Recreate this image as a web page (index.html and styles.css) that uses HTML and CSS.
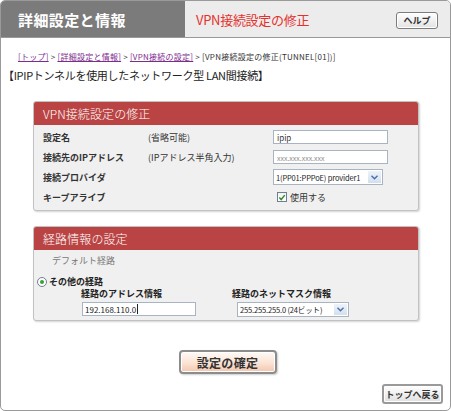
FILE: index.html
```html
<!DOCTYPE html>
<html lang="ja">
<head>
<meta charset="utf-8">
<title>VPN接続設定の修正</title>
<link rel="stylesheet" href="styles.css">
</head>
<body>
<div class="frame">
  <div class="header">
    <div class="header-left">詳細設定と情報</div>
    <div class="header-right">
      <span class="page-title">VPN接続設定の修正</span>
      <button class="help-btn" type="button">ヘルプ</button>
    </div>
  </div>

  <div class="breadcrumb">
    <a href="#">[トップ]</a> &gt; <a href="#">[詳細設定と情報]</a> &gt; <a href="#">[VPN接続の設定]</a> &gt; [VPN接続設定の修正(TUNNEL[01])]
  </div>
  <div class="section-title">【IPIPトンネルを使用したネットワーク型 LAN間接続】</div>

  <div class="panel panel-vpn">
    <div class="panel-head">VPN接続設定の修正</div>
    <div class="panel-body grid">
      <div class="lbl">設定名</div>
      <div class="note">(省略可能)</div>
      <div class="ctl"><input class="txt" type="text" value="ipip"></div>

      <div class="lbl">接続先のIPアドレス</div>
      <div class="note">(IPアドレス半角入力)</div>
      <div class="ctl"><input class="txt ph" type="text" placeholder="xxx.xxx.xxx.xxx"></div>

      <div class="lbl">接続プロバイダ</div>
      <div class="note"></div>
      <div class="ctl">
        <div class="sel sel-prov">
          <span class="sel-text">1(PP01:PPPoE) provider1</span>
          <span class="sel-arrow"><svg width="7" height="5" viewBox="0 0 7 5"><path d="M0.5 0.8 L3.5 3.8 L6.5 0.8" fill="none" stroke="#4a6fa5" stroke-width="1.4"/></svg></span>
        </div>
      </div>

      <div class="lbl">キープアライブ</div>
      <div class="note"></div>
      <div class="ctl chk-wrap">
        <span class="chk"><svg width="9" height="9" viewBox="0 0 9 9"><path d="M1.5 4.5 L3.6 6.8 L7.6 1.8" fill="none" stroke="#2e8b2e" stroke-width="1.6"/></svg></span>
        <span class="chk-label">使用する</span>
      </div>
    </div>
  </div>

  <div class="panel panel-route">
    <div class="panel-head head-route">経路情報の設定</div>
    <div class="panel-body route-body">
      <div class="default-route">デフォルト経路</div>
      <div class="other-route">
        <span class="radio"><span class="radio-dot"></span></span>
        <span class="other-label">その他の経路</span>
      </div>
      <div class="route-fields">
        <div class="field field-addr">
          <div class="field-lbl">経路のアドレス情報</div>
          <div class="addr-input"><span class="addr-val">192.168.110.0</span><span class="caret"></span></div>
        </div>
        <div class="field field-mask">
          <div class="field-lbl">経路のネットマスク情報</div>
          <div class="sel sel-mask">
            <span class="sel-text">255.255.255.0 (24ビット)</span>
            <span class="sel-arrow"><svg width="7" height="5" viewBox="0 0 7 5"><path d="M0.5 0.8 L3.5 3.8 L6.5 0.8" fill="none" stroke="#4a6fa5" stroke-width="1.4"/></svg></span>
          </div>
        </div>
      </div>
    </div>
  </div>

  <div class="actions">
    <button class="confirm-btn" type="button">設定の確定</button>
  </div>
  <div class="back-row">
    <button class="back-btn" type="button">トップへ戻る</button>
  </div>
</div>
</body>
</html>
```

FILE: styles.css
```css
html, body {
  margin: 0;
  padding: 0;
  background: #ffffff;
}
body {
  font-family: "Noto Sans CJK JP", "Noto Sans", sans-serif;
  color: #333333;
}
.frame {
  box-sizing: border-box;
  width: 451px;
  height: 411px;
  border: 1px solid #9a9a9a;
  border-radius: 5px;
  overflow: hidden;
  display: flex;
  flex-direction: column;
  background: #ffffff;
}
.header {
  height: 36px;
  display: flex;
  border-bottom: 1px solid #9a9a9a;
  flex-shrink: 0;
}
.header-left {
  width: 184px;
  box-sizing: border-box;
  background: #7b7b7b;
  color: #ffffff;
  font-weight: bold;
  font-size: 15px;
  letter-spacing: 0.4px;
  padding-left: 17px;
  display: flex;
  align-items: center;
}
.header-right {
  flex: 1;
  background: #ececec;
  display: flex;
  align-items: center;
  justify-content: space-between;
  padding: 0 12px 0 11px;
}
.page-title {
  color: #e5312d;
  font-size: 13px;
  letter-spacing: -0.3px;
}
.help-btn {
  width: 42px;
  height: 17px;
  margin-top: 3px;
  padding: 0;
  border: 1px solid #7c7c7c;
  border-radius: 3px;
  background: linear-gradient(#ffffff, #e2e2e2);
  box-shadow: inset 0 0 0 1px #ffffff;
  font-family: "Noto Sans CJK JP", sans-serif;
  font-size: 9px;
  font-weight: bold;
  color: #333333;
  line-height: 15px;
}
.breadcrumb {
  margin-top: 13px;
  padding-left: 17px;
  font-size: 8px;
  line-height: 12px;
  letter-spacing: 0.25px;
  color: #333333;
  white-space: nowrap;
}
.breadcrumb a {
  color: #7d2b8e;
  text-decoration: underline;
}
.section-title {
  margin-top: 5px;
  padding-left: 2px;
  font-size: 11px;
  line-height: 14px;
  color: #222222;
  letter-spacing: -0.3px;
}
.panel {
  margin-left: 32px;
  width: 386px;
  box-sizing: border-box;
  border: 1px solid #c2c2c2;
  border-radius: 3px;
  background: #f0f0f0;
  box-shadow: 1px 1px 2px rgba(0, 0, 0, 0.18);
  overflow: hidden;
}
.panel-vpn {
  margin-top: 19px;
}
.panel-route {
  margin-top: 15px;
}
.panel-head {
  height: 23px;
  background: #ba4444;
  color: #ffffff;
  font-size: 12px;
  font-weight: 300;
  line-height: 23px;
  padding-left: 9px;
  letter-spacing: 0.1px;
}
.grid {
  display: grid;
  grid-template-columns: 105px 125px 1fr;
  grid-auto-rows: 20px;
  align-items: center;
  padding: 2px 0 3px 9px;
}
.lbl {
  font-size: 9px;
  font-weight: bold;
  color: #333333;
  white-space: nowrap;
}
.note {
  font-size: 9px;
  color: #333333;
  white-space: nowrap;
}
.ctl {
  display: flex;
  align-items: center;
}
.txt {
  box-sizing: border-box;
  width: 115px;
  height: 14px;
  border: 1px solid #a9b4c2;
  background: #ffffff;
  padding: 0 3px;
  font-family: "Noto Sans CJK JP", sans-serif;
  font-size: 8px;
  color: #333333;
  outline: none;
}
.txt::placeholder {
  color: #8a8a8a;
  font-size: 7px;
}
.sel {
  position: relative;
  box-sizing: border-box;
  height: 16px;
  border: 1px solid #a9b4c2;
  background: #ffffff;
  display: flex;
  align-items: center;
  overflow: hidden;
}
.sel-prov {
  width: 110px;
}
.sel-text {
  padding-left: 2px;
  font-size: 7.5px;
  letter-spacing: -0.15px;
  color: #222222;
  white-space: nowrap;
}
.sel-arrow {
  position: absolute;
  right: 1px;
  top: 1px;
  bottom: 1px;
  width: 13px;
  background: linear-gradient(#eef3fa, #d3dfee);
  display: flex;
  align-items: center;
  justify-content: center;
}
.chk-wrap {
  padding-left: 4px;
  gap: 3px;
}
.chk {
  box-sizing: border-box;
  width: 10px;
  height: 10px;
  border: 1px solid #6f7f8f;
  background: linear-gradient(#f2f2f2, #ffffff);
  display: flex;
  align-items: center;
  justify-content: center;
}
.chk-label {
  font-size: 9px;
  color: #333333;
}
.route-body {
  padding: 4px 0 3px 0;
}
.default-route {
  padding-left: 18px;
  font-size: 9px;
  line-height: 14px;
  color: #777777;
}
.other-route {
  margin-top: 8px;
  padding-left: 3px;
  display: flex;
  align-items: center;
  gap: 2px;
  line-height: 11px;
}
.radio {
  box-sizing: border-box;
  width: 10px;
  height: 10px;
  border: 1px solid #6f7f8f;
  border-radius: 50%;
  background: #ffffff;
  display: flex;
  align-items: center;
  justify-content: center;
}
.radio-dot {
  width: 4px;
  height: 4px;
  border-radius: 50%;
  background: #3aa03a;
}
.other-label {
  font-size: 9px;
  font-weight: bold;
  color: #222222;
}
.route-fields {
  display: flex;
  padding-left: 47px;
  margin-top: 1px;
}
.field-addr {
  width: 151px;
}
.field-lbl {
  font-size: 9px;
  font-weight: bold;
  color: #222222;
  line-height: 12px;
  white-space: nowrap;
}
.addr-input {
  margin-top: 2px;
  margin-left: 1px;
  box-sizing: border-box;
  width: 114px;
  height: 14px;
  border: 1px solid #a9b4c2;
  background: #ffffff;
  display: flex;
  align-items: center;
  padding-left: 2px;
}
.addr-val {
  font-size: 8px;
  color: #222222;
}
.caret {
  width: 1px;
  height: 10px;
  background: #222222;
  margin-left: 1px;
}
.sel-mask {
  margin-top: 2px;
  margin-left: 5px;
  width: 112px;
  height: 15px;
}
.actions {
  margin-top: 29px;
  display: flex;
  justify-content: center;
  padding-left: 4px;
}
.confirm-btn {
  width: 98px;
  height: 24px;
  box-sizing: border-box;
  border: 2px solid #8c8c8c;
  border-radius: 4px;
  background: linear-gradient(#fffaf6 0%, #fbe3d4 55%, #f3c6ad 100%);
  box-shadow: inset 0 0 0 1px #ffffff, 1px 1px 2px rgba(0,0,0,0.2);
  font-family: "Noto Sans CJK JP", sans-serif;
  font-size: 12px;
  font-weight: bold;
  color: #333333;
  letter-spacing: 0.3px;
  padding: 0;
}
.back-row {
  margin-top: 10px;
  display: flex;
  justify-content: flex-end;
  padding-right: 7px;
}
.back-btn {
  width: 61px;
  height: 20px;
  box-sizing: border-box;
  border: 2px solid #9a9a9a;
  border-radius: 3px;
  background: linear-gradient(#ffffff, #e0e0e0);
  box-shadow: inset 0 0 0 1px #ffffff;
  font-family: "Noto Sans CJK JP", sans-serif;
  font-size: 9px;
  font-weight: bold;
  color: #333333;
  padding: 0;
}
```
